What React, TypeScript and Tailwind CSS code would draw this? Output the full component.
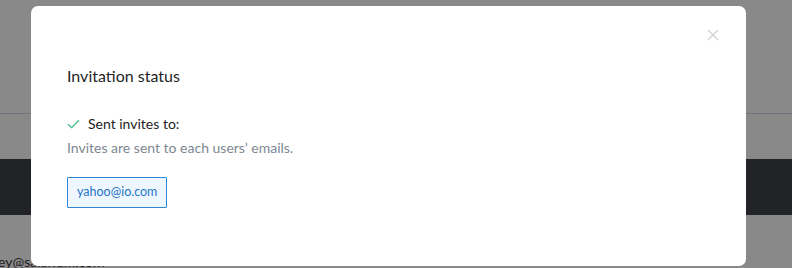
import React from "react";

export default function App() {
  return (
    <div className="relative w-[792px] h-[268px] overflow-hidden bg-[#898989]" style={{ fontFamily: "Lato, 'Noto Sans', sans-serif" }}>
      <div className="flex flex-col">
        <div className="h-[114px] border-b border-[#6e757e]" />
        <div className="h-[45px]" />
        <div className="h-[56px] bg-[#222327]" />
        <div className="h-[38px]" />
        <div className="pl-0 text-[14px] leading-[18px] text-[#1e1e1e] -ml-[2px]">ey@salarium.com</div>
      </div>

      <div className="absolute left-[31px] top-[6px] w-[715px] h-[260px] rounded-[7px] bg-white px-[36px] pt-[58px]">
        <button className="absolute right-[26px] top-[22px] w-[14px] h-[14px] flex items-center justify-center text-[#cfcfcf]">
          <svg width="12" height="12" viewBox="0 0 12 12" fill="none" stroke="currentColor" strokeWidth="1.1">
            <path d="M1 1L11 11M11 1L1 11" />
          </svg>
        </button>
        <h2 className="text-[16px] leading-[24px] text-[#1f1f1f] font-normal">Invitation status</h2>
        <div className="mt-[26px] flex items-center gap-[8px] text-[14px] leading-[20px] text-[#222]">
          <svg width="13" height="10" viewBox="0 0 13 10" fill="none" stroke="#3fbf8a" strokeWidth="1.3">
            <path d="M1 5.2L4.6 8.6L12 1.2" />
          </svg>
          <span>Sent invites to:</span>
        </div>
        <p className="mt-[4px] text-[14px] leading-[20px] text-[#7d8893]">Invites are sent to each users’ emails.</p>
        <div className="mt-[19px] flex">
          <span className="h-[31px] px-[9px] flex items-center border border-[#2e86d4] bg-[#eef7ff] text-[12.5px] text-[#1f74c4] rounded-[1px]">yahoo@io.com</span>
        </div>
      </div>
    </div>
  );
}
